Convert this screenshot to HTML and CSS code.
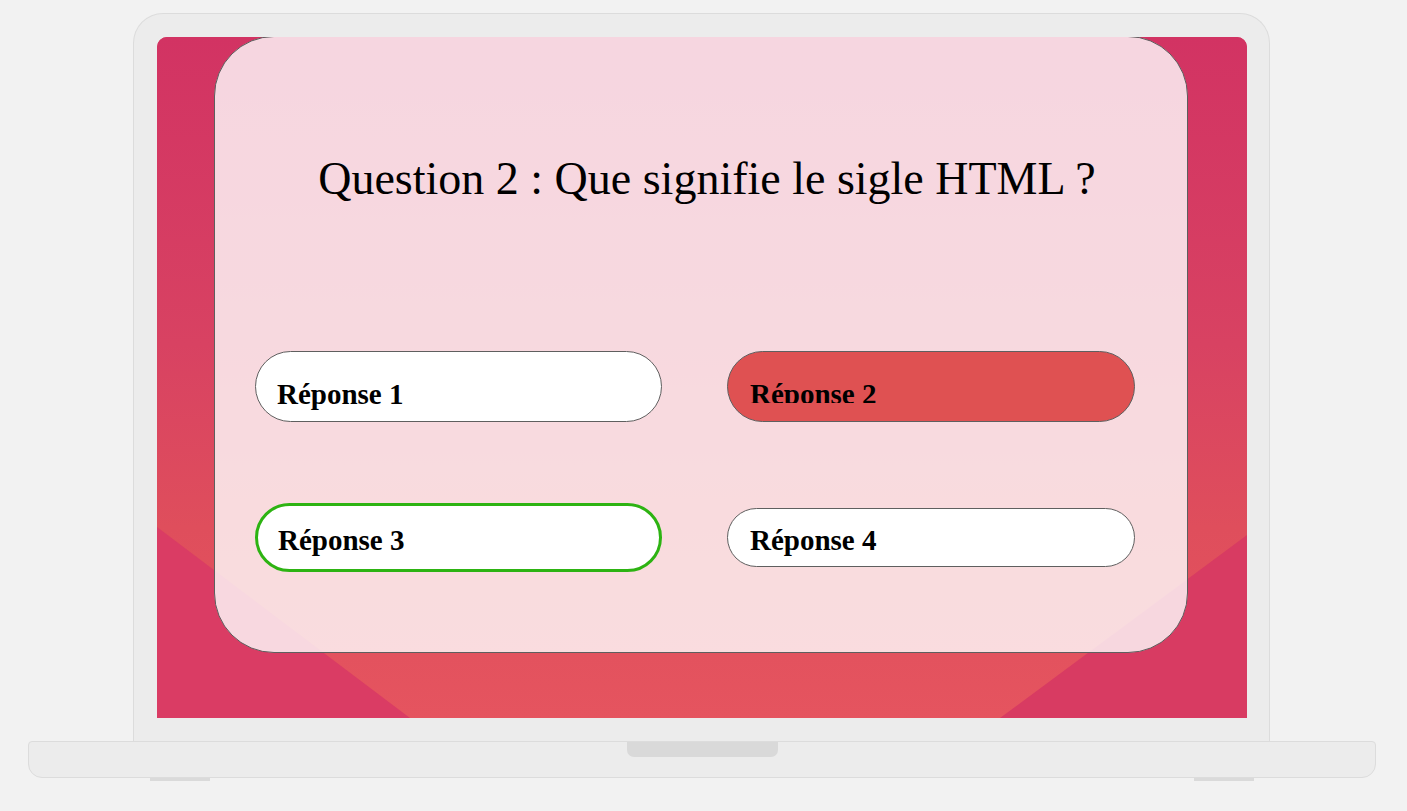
FILE: index.html
```html
<!DOCTYPE html>
<html lang="fr">
<head>
<meta charset="utf-8">
<title>Quiz</title>
<link rel="stylesheet" href="styles.css">
</head>
<body>
<div class="laptop">
  <div class="lid">
    <div class="screen">
      <svg class="wallpaper" viewBox="0 0 1090 681" preserveAspectRatio="none" aria-hidden="true">
        <defs>
          <linearGradient id="wp" x1="0" y1="0" x2="0" y2="1">
            <stop offset="0" stop-color="#d23363"/>
            <stop offset="0.45" stop-color="#d84262"/>
            <stop offset="0.72" stop-color="#df4e5c"/>
            <stop offset="1" stop-color="#e5545f"/>
          </linearGradient>
        </defs>
        <rect x="0" y="0" width="1090" height="681" fill="url(#wp)"/>
        <polygon points="0,490 253,681 0,681" fill="#da3c64"/>
        <polygon points="1090,498 843,681 1090,681" fill="#d83b62"/>
      </svg>
      <div class="card">
        <h1 class="question">Question 2 : Que signifie le sigle HTML ?</h1>
        <div class="answers">
          <div class="answer answer-top">Réponse 1</div>
          <div class="answer answer-top answer-wrong"><span class="clip">Réponse 2</span></div>
          <div class="answer answer-right">Réponse 3</div>
          <div class="answer answer-plain">Réponse 4</div>
        </div>
      </div>
    </div>
  </div>
  <div class="base"><div class="notch"></div></div>
  <div class="feet"><span class="foot"></span><span class="foot"></span></div>
</div>
</body>
</html>
```

FILE: styles.css
```css
html, body {
  margin: 0;
  padding: 0;
  background: #f2f2f2;
}

.laptop {
  width: 1348px;
  margin-left: 28px;
  padding-top: 13px;
}

.lid {
  box-sizing: border-box;
  width: 1137px;
  height: 728px;
  margin-left: 105px;
  padding: 23px 22px 0 23px;
  background: #ececec;
  border: 1px solid #dcdcdc;
  border-bottom: none;
  border-radius: 30px 30px 0 0;
}

.screen {
  position: relative;
  width: 1090px;
  height: 681px;
  overflow: hidden;
  border-radius: 10px 10px 0 0;
  background: #d8425f;
  padding-left: 57px;
  box-sizing: border-box;
}

.wallpaper {
  position: absolute;
  left: 0;
  top: 0;
  width: 1090px;
  height: 681px;
  display: block;
}

.card {
  position: relative;
  box-sizing: border-box;
  width: 974px;
  height: 617px;
  margin-top: -1px;
  padding: 116px 52px 0 40px;
  background: rgba(255, 255, 255, 0.8);
  border: 1px solid #5e5e5e;
  border-radius: 60px;
}

.question {
  margin: 0 -56px 0 -32px;
  font-family: "Liberation Serif", "DejaVu Serif", serif;
  font-weight: 400;
  font-size: 46px;
  line-height: 52px;
  text-align: center;
  color: #000;
}

.answers {
  display: grid;
  grid-template-columns: 407px 408px;
  grid-template-rows: 71px 69px;
  column-gap: 65px;
  row-gap: 81px;
  align-items: center;
  margin-top: 146px;
}

.answer {
  box-sizing: border-box;
  background: #fff;
  border: 1px solid #5f5f5f;
  border-radius: 999px;
  padding-left: 21px;
  font-family: "Liberation Serif", "DejaVu Serif", serif;
  font-weight: 700;
  font-size: 29px;
  line-height: 32px;
  color: #000;
}

.answer-top {
  height: 71px;
  padding-top: 26px;
}

.answer-wrong {
  background: #df5152;
  padding-left: 22px;
}

.clip {
  display: block;
  height: 25px;
  overflow: hidden;
}

.answer-right {
  height: 69px;
  padding-top: 18px;
  padding-left: 20px;
  border: 3px solid #2db312;
}

.answer-plain {
  height: 59px;
  padding-top: 15px;
  padding-left: 22px;
}

.base {
  position: relative;
  box-sizing: border-box;
  height: 37px;
  background: #ececec;
  border: 1px solid #dcdcdc;
  border-radius: 4px 4px 14px 14px;
  display: flex;
  justify-content: center;
}

.notch {
  width: 151px;
  height: 15px;
  background: #d9d9d9;
  border-radius: 0 0 7px 7px;
}

.feet {
  display: flex;
  justify-content: space-between;
  padding: 0 122px;
  margin-top: -1px;
}

.foot {
  display: block;
  width: 60px;
  height: 4px;
  background: #dadada;
}
```
